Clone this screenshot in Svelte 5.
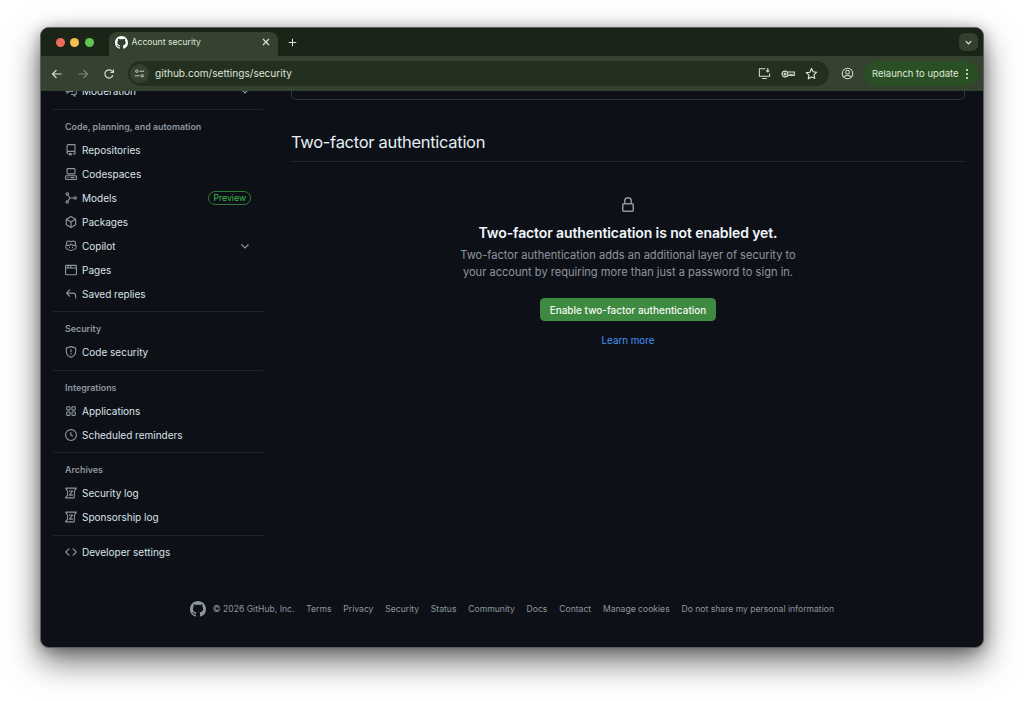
<script>
  const icons = {
    repo: 'M2 2.5A2.5 2.5 0 0 1 4.5 0h8.75a.75.75 0 0 1 .75.75v12.5a.75.75 0 0 1-.75.75h-2.5a.75.75 0 0 1 0-1.5h1.75v-2h-8a1 1 0 0 0-.714 1.7.75.75 0 1 1-1.072 1.05A2.495 2.495 0 0 1 2 11.5Zm10.5-1h-8a1 1 0 0 0-1 1v6.708A2.486 2.486 0 0 1 4.5 9h8ZM5 12.25a.25.25 0 0 1 .25-.25h3.5a.25.25 0 0 1 .25.25v3.25a.25.25 0 0 1-.4.2l-1.45-1.087a.249.249 0 0 0-.3 0L5.4 15.7a.25.25 0 0 1-.4-.2Z',
    codespaces: 'M0 11.25c0-.966.784-1.75 1.75-1.75h12.5c.966 0 1.75.784 1.75 1.75v3A1.75 1.75 0 0 1 14.25 16H1.75A1.75 1.75 0 0 1 0 14.25Zm2-9.5C2 .784 2.784 0 3.75 0h8.5C13.216 0 14 .784 14 1.75v5a1.75 1.75 0 0 1-1.75 1.75h-8.5A1.75 1.75 0 0 1 2 6.75Zm1.75-.25a.25.25 0 0 0-.25.25v5c0 .138.112.25.25.25h8.5a.25.25 0 0 0 .25-.25v-5a.25.25 0 0 0-.25-.25Zm-2 9.5a.25.25 0 0 0-.25.25v3c0 .138.112.25.25.25h12.5a.25.25 0 0 0 .25-.25v-3a.25.25 0 0 0-.25-.25ZM7 12.75a.75.75 0 0 1 .75-.75h4.5a.75.75 0 0 1 0 1.5h-4.5a.75.75 0 0 1-.75-.75Zm-4 0a.75.75 0 0 1 .75-.75h.5a.75.75 0 0 1 0 1.5h-.5a.75.75 0 0 1-.75-.75Z',
    package: 'm8.878.392 5.25 3.045c.54.314.872.89.872 1.514v6.098a1.75 1.75 0 0 1-.872 1.514l-5.25 3.045a1.75 1.75 0 0 1-1.756 0l-5.25-3.045A1.75 1.75 0 0 1 1 11.049V4.951c0-.624.332-1.201.872-1.514L7.122.392a1.75 1.75 0 0 1 1.756 0ZM7.875 1.69l-4.63 2.685L8 7.133l4.755-2.758-4.63-2.685a.248.248 0 0 0-.25 0ZM2.5 5.677v5.372c0 .09.047.171.125.216l4.625 2.683V8.432Zm6.25 8.271 4.625-2.683a.25.25 0 0 0 .125-.216V5.677L8.75 8.432Z',
    browser: 'M0 2.75C0 1.784.784 1 1.75 1h12.5c.966 0 1.75.784 1.75 1.75v10.5A1.75 1.75 0 0 1 14.25 15H1.75A1.75 1.75 0 0 1 0 13.25ZM14.5 6h-13v7.25c0 .138.112.25.25.25h12.5a.25.25 0 0 0 .25-.25Zm-6-3.5v2h6v-1.75a.25.25 0 0 0-.25-.25ZM5 2.5v2h2v-2Zm-3.25 0a.25.25 0 0 0-.25.25V4.5h2v-2Z',
    reply: 'M6.78 1.97a.75.75 0 0 1 0 1.06L3.81 6h6.44A4.75 4.75 0 0 1 15 10.75v2.5a.75.75 0 0 1-1.5 0v-2.5a3.25 3.25 0 0 0-3.25-3.25H3.81l2.97 2.97a.749.749 0 0 1-.326 1.275.749.749 0 0 1-.734-.215L1.47 7.28a.75.75 0 0 1 0-1.06l4.25-4.25a.75.75 0 0 1 1.06 0Z',
    shield: 'M7.467.133a1.748 1.748 0 0 1 1.066 0l5.25 1.68A1.75 1.75 0 0 1 15 3.48V7c0 1.566-.32 3.182-1.303 4.682-.983 1.498-2.585 2.813-5.032 3.855a1.697 1.697 0 0 1-1.33 0c-2.447-1.042-4.049-2.357-5.032-3.855C1.32 10.182 1 8.566 1 7V3.48a1.75 1.75 0 0 1 1.217-1.667Zm.61 1.429a.25.25 0 0 0-.153 0l-5.25 1.68a.25.25 0 0 0-.174.238V7c0 1.358.275 2.666 1.057 3.86.784 1.194 2.121 2.34 4.366 3.297a.196.196 0 0 0 .154 0c2.245-.956 3.582-2.104 4.366-3.298C13.225 9.666 13.5 8.36 13.5 7V3.48a.251.251 0 0 0-.174-.237l-5.25-1.68ZM8.75 4.75v3a.75.75 0 0 1-1.5 0v-3a.75.75 0 0 1 1.5 0ZM9 10.5a1 1 0 1 1-2 0 1 1 0 0 1 2 0Z',
    apps: 'M1.5 3.25c0-.966.784-1.75 1.75-1.75h2.5c.966 0 1.75.784 1.75 1.75v2.5A1.75 1.75 0 0 1 5.75 7.5h-2.5A1.75 1.75 0 0 1 1.5 5.75Zm7 0c0-.966.784-1.75 1.75-1.75h2.5c.966 0 1.75.784 1.75 1.75v2.5a1.75 1.75 0 0 1-1.75 1.75h-2.5A1.75 1.75 0 0 1 8.5 5.75Zm-7 7c0-.966.784-1.75 1.75-1.75h2.5c.966 0 1.75.784 1.75 1.75v2.5a1.75 1.75 0 0 1-1.75 1.75h-2.5a1.75 1.75 0 0 1-1.75-1.75Zm7 0c0-.966.784-1.75 1.75-1.75h2.5c.966 0 1.75.784 1.75 1.75v2.5a1.75 1.75 0 0 1-1.75 1.75h-2.5a1.75 1.75 0 0 1-1.75-1.75ZM3.25 3a.25.25 0 0 0-.25.25v2.5c0 .138.112.25.25.25h2.5A.25.25 0 0 0 6 5.75v-2.5A.25.25 0 0 0 5.75 3Zm7 0a.25.25 0 0 0-.25.25v2.5c0 .138.112.25.25.25h2.5a.25.25 0 0 0 .25-.25v-2.5a.25.25 0 0 0-.25-.25Zm-7 7a.25.25 0 0 0-.25.25v2.5c0 .138.112.25.25.25h2.5a.25.25 0 0 0 .25-.25v-2.5a.25.25 0 0 0-.25-.25Zm7 0a.25.25 0 0 0-.25.25v2.5c0 .138.112.25.25.25h2.5a.25.25 0 0 0 .25-.25v-2.5a.25.25 0 0 0-.25-.25Z',
    clock: 'M8 0a8 8 0 1 1 0 16A8 8 0 0 1 8 0ZM1.5 8a6.5 6.5 0 1 0 13 0 6.5 6.5 0 0 0-13 0Zm7-3.25v2.992l2.028.812a.75.75 0 0 1-.557 1.392l-2.5-1A.751.751 0 0 1 7 8.25v-3.5a.75.75 0 0 1 1.5 0Z',
    code: 'm11.28 3.22 4.25 4.25a.75.75 0 0 1 0 1.06l-4.25 4.25a.749.749 0 0 1-1.275-.326.749.749 0 0 1 .215-.734L13.94 8l-3.72-3.72a.749.749 0 0 1 .326-1.275.749.749 0 0 1 .734.215Zm-6.56 0a.751.751 0 0 1 1.042.018.751.751 0 0 1 .018 1.042L2.06 8l3.72 3.72a.749.749 0 0 1-.326 1.275.749.749 0 0 1-.734-.215L.47 8.53a.75.75 0 0 1 0-1.06Z'
  };
  const lock = 'M4 4a4 4 0 0 1 8 0v2h.25c.966 0 1.75.784 1.75 1.75v5.5A1.75 1.75 0 0 1 12.25 15h-8.5A1.75 1.75 0 0 1 2 13.25v-5.5C2 6.784 2.784 6 3.75 6H4Zm8.25 3.5h-8.5a.25.25 0 0 0-.25.25v5.5c0 .138.112.25.25.25h8.5a.25.25 0 0 0 .25-.25v-5.5a.25.25 0 0 0-.25-.25ZM10.5 6V4a2.5 2.5 0 1 0-5 0v2Z';
  const mark = 'M8 0c4.42 0 8 3.58 8 8a8.013 8.013 0 0 1-5.45 7.59c-.4.08-.55-.17-.55-.38 0-.27.01-1.13.01-2.2 0-.75-.25-1.23-.54-1.48 1.78-.2 3.65-.88 3.65-3.95 0-.88-.31-1.59-.82-2.15.08-.2.36-1.02-.08-2.12 0 0-.67-.22-2.2.82-.64-.18-1.32-.27-2-.27-.68 0-1.36.09-2 .27-1.53-1.03-2.2-.82-2.2-.82-.44 1.1-.16 1.92-.08 2.12-.51.56-.82 1.28-.82 2.15 0 3.06 1.86 3.75 3.64 3.95-.23.2-.44.55-.51 1.07-.46.21-1.61.55-2.33-.66-.15-.24-.6-.83-1.23-.82-.67.01-.27.38.01.53.34.19.73.9.82 1.13.16.45.68 1.31 2.69.94 0 .67.01 1.3.01 1.49 0 .21-.15.45-.55.38A7.995 7.995 0 0 1 0 8c0-4.42 3.58-8 8-8Z';

  const groups = [
    {
      title: 'Code, planning, and automation',
      items: [
        { label: 'Repositories', icon: 'repo' },
        { label: 'Codespaces', icon: 'codespaces' },
        { label: 'Models', icon: 'models', badge: 'Preview' },
        { label: 'Packages', icon: 'package' },
        { label: 'Copilot', icon: 'copilot', chevron: true },
        { label: 'Pages', icon: 'browser' },
        { label: 'Saved replies', icon: 'reply' }
      ]
    },
    { title: 'Security', items: [{ label: 'Code security', icon: 'shield' }] },
    {
      title: 'Integrations',
      items: [
        { label: 'Applications', icon: 'apps' },
        { label: 'Scheduled reminders', icon: 'clock' }
      ]
    },
    {
      title: 'Archives',
      items: [
        { label: 'Security log', icon: 'log' },
        { label: 'Sponsorship log', icon: 'log' }
      ]
    }
  ];

  const footerLinks = ['Terms', 'Privacy', 'Security', 'Status', 'Community', 'Docs', 'Contact', 'Manage cookies', 'Do not share my personal information'];
</script>

{#snippet navIcon(name)}
  <svg class="nav-icon" viewBox="0 0 16 16" aria-hidden="true">
    {#if icons[name]}
      <path fill="currentColor" d={icons[name]} />
    {:else if name === 'models'}
      <g fill="none" stroke="currentColor" stroke-width="1.5">
        <circle cx="3" cy="2.6" r="1.6" />
        <circle cx="3" cy="13.4" r="1.6" />
        <circle cx="13.6" cy="8" r="1.6" />
        <path d="M3.8 4 6.5 8 3.8 12M6.5 8H12" />
      </g>
    {:else if name === 'copilot'}
      <g fill="none" stroke="currentColor" stroke-width="1.4" stroke-linejoin="round">
        <path d="M1.2 7.4 2 6.6V4c0-1.8 1.4-2.8 3-2.8 1.4 0 2.4.5 3 1.5.6-1 1.6-1.5 3-1.5 1.6 0 3 1 3 2.8v2.6l.8.8v3.2c-1.6 2.2-4 3.4-6.8 3.4s-5.2-1.2-6.8-3.4Z" />
        <path d="M2.6 6.6c2 1 4 .7 5.4-1.2 1.4 1.9 3.4 2.2 5.4 1.2" />
        <path d="M6 9v2M10 9v2" />
      </g>
    {:else if name === 'log'}
      <g fill="none" stroke="currentColor" stroke-width="1.4" stroke-linejoin="round" stroke-linecap="round">
        <path d="M1 2.200c0-.4.3-.7.700-.7h13.400l-2.600 4v8.300c0 .4-.3.7-.7.7H.9l2.600-4V5.500Z" />
        <path d="M5.800 5.200h4.400L5.800 10.800h4.400" />
      </g>
    {/if}
  </svg>
{/snippet}

<div class="desk">
<div class="window">
  <div class="tabstrip">
    <div class="lights">
      <span class="light red"></span>
      <span class="light amber"></span>
      <span class="light green"></span>
    </div>
    <div class="tab">
      <svg class="favicon" viewBox="0 0 16 16" aria-hidden="true"><path fill="#fff" d={mark} /></svg>
      <span class="tab-title">Account security</span>
      <svg class="tab-close" viewBox="0 0 10 10" aria-hidden="true"><path d="M2 2l6 6M8 2l-6 6" stroke="#dfe4da" stroke-width="1.2" /></svg>
    </div>
    <svg class="new-tab" viewBox="0 0 10 10" aria-hidden="true"><path d="M5 .8v8.4M.8 5h8.4" stroke="#dfe4da" stroke-width="1.1" /></svg>
    <button class="tab-search" aria-label="Search tabs">
      <svg viewBox="0 0 10 10" width="9" height="9" aria-hidden="true"><path d="M2 3.5 5 6.5 8 3.5" fill="none" stroke="#dfe4da" stroke-width="1.4" /></svg>
    </button>
  </div>

  <div class="toolbar">
    <svg class="tool" viewBox="0 0 12 12" aria-hidden="true"><path d="M10.5 6h-9M5.5 2 1.5 6l4 4" fill="none" stroke="#d5dccf" stroke-width="1.2" /></svg>
    <svg class="tool fwd" viewBox="0 0 12 12" aria-hidden="true"><path d="M1.5 6h9M6.500 2l4 4-4 4" fill="none" stroke="#7d8878" stroke-width="1.2" /></svg>
    <svg class="tool rel" viewBox="0 0 12 12" aria-hidden="true"><path d="M9.900 7.300A4.100 4.100 0 1 1 9 3.100L10.400 4.500M10.400 1.600v2.900H7.500" fill="none" stroke="#d5dccf" stroke-width="1.200" /></svg>
    <div class="omnibox">
      <span class="site-info">
        <svg viewBox="0 0 12 12" width="11" height="11" aria-hidden="true">
          <g fill="none" stroke="#d5dccf" stroke-width="1"><circle cx="3" cy="3.500" r="1.300" /><circle cx="9" cy="8.500" r="1.300" /><path d="M6 3.500h5M1 8.500h5" /></g>
        </svg>
      </span>
      <span class="url">github.com/settings/security</span>
      <span class="omni-icons">
        <svg viewBox="0 0 14 14" width="13" height="13" aria-hidden="true">
          <g fill="none" stroke="#d5dccf" stroke-width="1.100"><path d="M8 2H1.500v8h11V7M4.500 12.500h5M10.500 1v4M8.800 3.600l1.700 1.700 1.700-1.700" /></g>
        </svg>
        <svg viewBox="0 0 14 14" width="14" height="14" aria-hidden="true">
          <g fill="none" stroke="#d5dccf" stroke-width="1.200"><circle cx="4" cy="7" r="2.900" /><circle cx="4" cy="7" r=".9" /><path d="M6.900 5h6.400v3.500h-1.400l-.9-1-.9 1-.9-1-.9 1H6.900" /></g>
        </svg>
        <svg viewBox="0 0 14 14" width="13" height="13" aria-hidden="true">
          <path d="M7 1.500l1.700 3.600 3.900.5-2.900 2.700.8 3.900L7 10.800l-3.500 1.900.8-3.900-2.900-2.700 3.900-.5Z" fill="none" stroke="#e2e7dd" stroke-width="1.200" stroke-linejoin="round" />
        </svg>
      </span>
    </div>
    <svg class="profile" viewBox="0 0 14 14" aria-hidden="true">
      <g fill="none" stroke="#d5dccf" stroke-width="1.100"><circle cx="7" cy="7" r="5.700" /><circle cx="7" cy="5.600" r="2" /><path d="M3.300 10.800c1-1.500 2.200-2 3.700-2s2.700.5 3.700 2" /></g>
    </svg>
    <div class="relaunch">
      <span>Relaunch to update</span>
      <svg viewBox="0 0 4 12" width="4" height="12" aria-hidden="true"><g fill="#dfe8d8"><circle cx="2" cy="2" r="1.100" /><circle cx="2" cy="6" r="1.100" /><circle cx="2" cy="10" r="1.100" /></g></svg>
    </div>
  </div>

  <div class="page">
    <div class="columns">
      <nav class="sidebar">
        <div class="row">
          <svg class="nav-icon" viewBox="0 0 16 16" aria-hidden="true">
            <path d="M1 2.500c0-.6.400-1 1-1h8c.6 0 1 .4 1 1v5c0 .6-.4 1-1 1H5.500L3 11V8.500H2c-.6 0-1-.4-1-1ZM13 6h1c.6 0 1 .4 1 1v4.500c0 .6-.4 1-1 1h-1V15l-2.500-2.500H8" fill="none" stroke="currentColor" stroke-width="1.400" />
          </svg>
          <span>Moderation</span>
          <svg class="chevron" viewBox="0 0 10 10" aria-hidden="true"><path d="M1.500 3.500 5 7l3.500-3.500" fill="none" stroke="currentColor" stroke-width="1.100" /></svg>
        </div>
        {#each groups as group}
          <hr />
          <h4>{group.title}</h4>
          {#each group.items as item}
            <div class="row">
              {@render navIcon(item.icon)}
              <span>{item.label}</span>
              {#if item.badge}
                <span class="badge">{item.badge}</span>
              {/if}
              {#if item.chevron}
                <svg class="chevron" viewBox="0 0 10 10" aria-hidden="true"><path d="M1.500 3.500 5 7l3.500-3.500" fill="none" stroke="currentColor" stroke-width="1.100" /></svg>
              {/if}
            </div>
          {/each}
        {/each}
        <hr class="last" />
        <div class="row">
          {@render navIcon('code')}
          <span>Developer settings</span>
        </div>
      </nav>

      <main>
        <div class="card-end"></div>
        <h2>Two-factor authentication</h2>
        <section class="blank">
          <svg class="lock" viewBox="0 0 16 16" aria-hidden="true"><path fill="currentColor" d={lock} /></svg>
          <h3>Two-factor authentication is not enabled yet.</h3>
          <p>Two-factor authentication adds an additional layer of security to<br />your account by requiring more than just a password to sign in.</p>
          <button class="enable">Enable two-factor authentication</button>
          <a class="learn" href="#learn">Learn more</a>
        </section>
      </main>
    </div>

    <footer>
      <svg class="foot-mark" viewBox="0 0 16 16" aria-hidden="true"><path fill="currentColor" d={mark} /></svg>
      <span class="copyright">© 2026 GitHub, Inc.</span>
      {#each footerLinks as link}
        <span>{link}</span>
      {/each}
    </footer>
  </div>
</div>
</div>

<style>
  :global(body) {
    margin: 0;
    background: #fff;
    font-family: Inter, "Liberation Sans", sans-serif;
  }

  .desk {
    box-sizing: border-box;
    height: 701px;
    padding: 27px 0 0 40px;
    overflow: hidden;
  }

  .window {
    box-sizing: border-box;
    width: 944px;
    height: 621px;
    display: flex;
    flex-direction: column;
    border: 1px solid #5d5f5c;
    border-radius: 9px;
    overflow: hidden;
    background: #0d1117;
    box-shadow: 0 14px 32px rgba(0, 0, 0, 0.55), 0 2px 14px rgba(0, 0, 0, 0.3);
  }

  .tabstrip {
    height: 28px;
    flex: none;
    display: flex;
    align-items: flex-end;
    background: #1b2517;
    position: relative;
  }

  .lights {
    display: flex;
    gap: 5.700px;
    align-self: center;
    margin-left: 14.500px;
    width: 53px;
  }

  .light {
    width: 9px;
    height: 9px;
    border-radius: 50%;
  }
  .red { background: #ed6a5e; }
  .amber { background: #f4bf4f; }
  .green { background: #61c554; }

  .tab {
    width: 169px;
    height: 24px;
    display: flex;
    align-items: center;
    box-sizing: border-box;
    padding: 0 7px 4px 6px;
    background: #34422f;
    border-radius: 8px 8px 0 0;
    color: #dfe4da;
  }

  .favicon {
    width: 13px;
    height: 13px;
  }

  .tab-title {
    margin-left: 4px;
    font-size: 8.650px;
    flex: 1;
  }

  .tab-close {
    width: 10px;
    height: 10px;
  }

  .new-tab {
    width: 9px;
    height: 9px;
    margin: 0 0 9.500px 10px;
  }

  .tab-search {
    margin: 0 5px 5px auto;
    width: 19px;
    height: 18px;
    padding: 0;
    border: 0;
    border-radius: 6px;
    background: #33402f;
    display: flex;
    align-items: center;
    justify-content: center;
  }

  .toolbar {
    height: 35px;
    flex: none;
    display: flex;
    align-items: center;
    background: #34422f;
    position: relative;
    padding-left: 10px;
  }

  .tool {
    width: 12px;
    height: 12px;
  }
  .fwd { margin-left: 14px; }
  .rel { margin-left: 14px; }

  .omnibox {
    width: 701px;
    height: 25px;
    margin-left: 13px;
    display: flex;
    align-items: center;
    background: #232f1f;
    border-radius: 12.500px;
    color: #dfe4da;
  }

  .site-info {
    width: 19px;
    height: 19px;
    margin-left: 2px;
    border-radius: 50%;
    background: #34422f;
    display: flex;
    align-items: center;
    justify-content: center;
  }

  .url {
    margin-left: 6px;
    padding-bottom: 1px;
    font-size: 10.100px;
    flex: 1;
  }

  .omni-icons {
    display: flex;
    align-items: center;
    gap: 10px;
    margin-right: 11px;
  }

  .profile {
    width: 13px;
    height: 13px;
    margin-left: 12px;
  }

  .relaunch {
    box-sizing: border-box;
    width: 114px;
    height: 25px;
    margin-left: 10px;
    padding: 0 9px 0 8px;
    display: flex;
    align-items: center;
    justify-content: space-between;
    background: #2a4f25;
    border-radius: 12.500px;
    color: #dfe8d8;
    font-size: 9.500px;
  }

  .page {
    flex: 1;
    min-height: 0;
    overflow: hidden;
    color: #e6edf3;
  }

  .columns {
    display: flex;
    align-items: flex-start;
  }

  .sidebar {
    width: 210px;
    margin: -12px 0 0 12px;
    flex: none;
  }

  .row {
    height: 24px;
    display: flex;
    align-items: center;
    padding-left: 12px;
    font-size: 10px;
    color: #dbe2e9;
  }

  .row > span:nth-of-type(1) {
    margin-left: 5px;
  }

  .nav-icon {
    width: 12px;
    height: 12px;
    flex: none;
    color: #8d96a0;
  }

  .chevron {
    width: 10px;
    height: 10px;
    margin-left: auto;
    margin-right: 13px;
    color: #8d96a0;
  }

  .badge {
    margin-left: auto;
    margin-right: 12px;
    height: 14px;
    box-sizing: border-box;
    padding: 0 4px;
    border: 1px solid #2f7a38;
    border-radius: 7px;
    color: #3fb950;
    font-size: 8.700px;
    line-height: 12px;
  }

  hr {
    margin: 5.500px 0 0;
    height: 1px;
    border: 0;
    background: #21262d;
  }

  hr.last {
    margin-bottom: 4.500px;
  }

  h4 {
    margin: 5px 0 0;
    height: 23px;
    padding-left: 12px;
    line-height: 23px;
    font-size: 8.900px;
    font-weight: 600;
    color: #8d96a0;
  }

  main {
    width: 674px;
    margin-left: 28px;
  }

  .card-end {
    box-sizing: border-box;
    height: 9px;
    border: 1px solid #30363d;
    border-top: 0;
    border-radius: 0 0 5px 5px;
  }

  h2 {
    margin: 31px 0 0;
    padding-bottom: 7px;
    border-bottom: 1px solid #21262d;
    font-size: 16.500px;
    letter-spacing: -0.3px;
    line-height: 23px;
    font-weight: 400;
    color: #e6edf3;
  }

  .blank {
    display: flex;
    flex-direction: column;
    align-items: center;
    padding-top: 35px;
  }

  .lock {
    width: 16px;
    height: 16px;
    color: #8d96a0;
  }

  h3 {
    margin: 10px 0 0;
    font-size: 14px;
    letter-spacing: -0.11px;
    line-height: 20px;
    font-weight: 600;
    color: #f0f6fc;
  }

  p {
    margin: 4px 0 0;
    text-align: center;
    font-size: 11.100px;
    line-height: 17px;
    color: #8d96a0;
  }

  .enable {
    margin-top: 17px;
    width: 176px;
    height: 23px;
    padding: 0;
    border: 0;
    border-radius: 4.500px;
    background: #3f8a41;
    color: #f2f7f0;
    font: 500 10px Inter, "Liberation Sans", sans-serif;
  }

  .learn {
    margin-top: 13px;
    font-size: 9.800px;
    line-height: 13px;
    color: #4493f8;
    text-decoration: none;
  }

  footer {
    margin-top: 37px;
    display: flex;
    align-items: center;
    justify-content: center;
    gap: 11.800px;
    font-size: 8.600px;
    color: #8d96a0;
  }

  .foot-mark {
    width: 16px;
    height: 16px;
    color: #8d96a0;
    margin-right: -5px;
  }
</style>
